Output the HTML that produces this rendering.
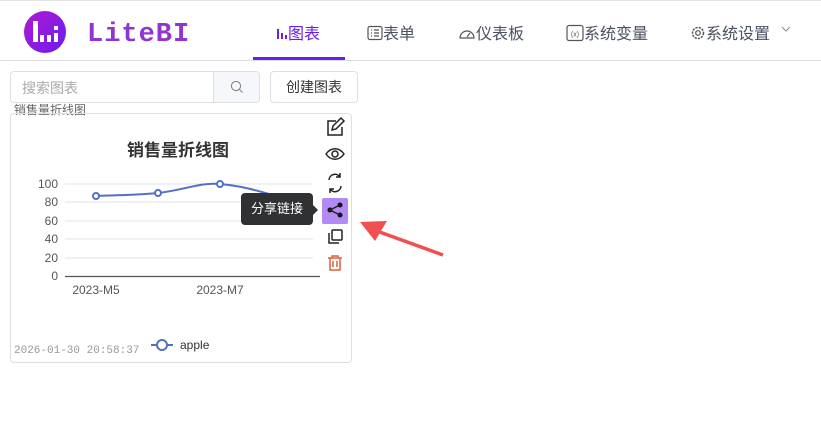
<!DOCTYPE html>
<html><head><meta charset="utf-8"><style>
*{margin:0;padding:0;box-sizing:border-box}
body{width:821px;height:447px;background:#fff;font-family:"Liberation Sans","Noto Sans CJK SC",sans-serif;position:relative;overflow:hidden}
.hdr{position:absolute;left:0;top:0;width:821px;height:61px;border-top:1px solid #e4e4e4;border-bottom:1px solid #dcdfe6;background:#fff}
.a{position:absolute}
.nav{position:absolute;top:20px;font-size:16px;color:#4a5060;white-space:nowrap}
</style></head><body>
<div class="hdr"></div>
<div class="a" style="left:24px;top:11px;width:42px;height:42px;border-radius:50%;background:linear-gradient(135deg,#b01ad0,#6a1cf0)"></div>
<svg class="a" style="left:24px;top:11px" width="42" height="42"><g fill="#fff"><rect x="9" y="10" width="5" height="21"/><rect x="16" y="24" width="4" height="7"/><rect x="23" y="24" width="4" height="7"/><rect x="30" y="22" width="4" height="9"/><rect x="30" y="15" width="4" height="4"/></g></svg>
<div class="a" style="left:87px;top:20px;font:bold 27px 'Liberation Mono',monospace;color:#9036d0;letter-spacing:1px">LiteBI</div>
<div class="nav" style="left:276px;color:#6b1cf0">
<svg width="12" height="12" style="vertical-align:-1px"><g fill="#6b1cf0"><rect x="1" y="1" width="2" height="10"/><rect x="5" y="5" width="2" height="6"/><rect x="9" y="7" width="2" height="4"/></g></svg>图表</div>
<div class="a" style="left:253px;top:57px;width:92px;height:3px;background:#6b1cf0"></div>
<div class="nav" style="left:367px"><svg width="16" height="16" style="vertical-align:-2px"><rect x="1" y="1.5" width="14" height="13" rx="2" fill="none" stroke="#555" stroke-width="1.2"/><path d="M4 5h1M7 5h5M4 8h1M7 8h5M4 11h1M7 11h5" stroke="#555" stroke-width="1.2"/></svg>表单</div>
<div class="nav" style="left:458px"><svg width="18" height="16" style="vertical-align:-2px"><path d="M2 13a7 7 0 1 1 14 0z" fill="none" stroke="#555" stroke-width="1.2"/><path d="M9 12l3-4" stroke="#555" stroke-width="1.2"/></svg>仪表板</div>
<div class="nav" style="left:566px"><svg width="18" height="18" style="vertical-align:-3px"><rect x="1" y="1.5" width="16" height="15" rx="2" fill="none" stroke="#555" stroke-width="1.2"/><text x="9" y="12.5" font-size="7" text-anchor="middle" fill="#555" font-family="Liberation Sans">(x)</text></svg>系统变量</div>
<div class="nav" style="left:690px"><svg width="16" height="16" style="vertical-align:-2px"><circle cx="8" cy="8" r="5.5" fill="none" stroke="#555" stroke-width="1.5" stroke-dasharray="2.2 1.1"/><circle cx="8" cy="8" r="2.3" fill="none" stroke="#555" stroke-width="1.2"/></svg>系统设置</div>
<svg class="a" style="left:781px;top:26px" width="10" height="7"><path d="M1 1l4 4 4-4" fill="none" stroke="#888" stroke-width="1"/></svg>

<div class="a" style="left:10px;top:71px;width:250px;height:32px;border:1px solid #dcdfe6;border-radius:4px"></div>
<div class="a" style="left:213px;top:72px;width:46px;height:30px;background:#f5f7fa;border-left:1px solid #dcdfe6;border-radius:0 4px 4px 0"></div>
<svg class="a" style="left:230px;top:80px" width="14" height="14"><circle cx="6" cy="6" r="4.6" fill="none" stroke="#888" stroke-width="1.1"/><path d="M9.5 9.5l3 3" stroke="#888" stroke-width="1.1"/></svg>
<div class="a" style="left:22px;top:78px;font-size:14px;color:#aaa">搜索图表</div>
<div class="a" style="left:270px;top:71px;width:88px;height:32px;border:1px solid #dcdfe6;border-radius:4px;font-size:14px;color:#333;text-align:center;line-height:30px">创建图表</div>
<div class="a" style="left:14px;top:101px;font-size:12px;color:#666">销售量折线图</div>

<div class="a" style="left:10px;top:113px;width:342px;height:250px;border:1px solid #dcdfe6;border-radius:4px"></div>
<div class="a" style="left:127px;top:136px;font-size:17px;font-weight:bold;color:#333">销售量折线图</div>
<svg class="a" style="left:0;top:0" width="330" height="360" font-family="Liberation Sans" font-size="12" fill="#555">
<g stroke="#e0e3ea"><path d="M65 184H313M65 202H313M65 221H313M65 239H313M65 258H313"/></g>
<path d="M65 276.5H320" stroke="#555" stroke-width="1.3"/>
<g text-anchor="end"><text x="58" y="188">100</text><text x="58" y="206">80</text><text x="58" y="225">60</text><text x="58" y="243">40</text><text x="58" y="262">20</text><text x="58" y="280">0</text></g>
<text x="96" y="294" text-anchor="middle">2023-M5</text><text x="220" y="294" text-anchor="middle">2023-M7</text>
<path d="M96 196C120 195 140 195 158 193C185 190 200 182 220 184C245 186 265 193 290 200" fill="none" stroke="#5470c6" stroke-width="2"/>
<g fill="#fff" stroke="#5470c6" stroke-width="2"><circle cx="96" cy="196" r="3"/><circle cx="158" cy="193" r="3"/><circle cx="220" cy="184" r="3"/></g>
<path d="M151 345H173" stroke="#5470c6" stroke-width="2"/><circle cx="162" cy="345" r="5" fill="#fff" stroke="#5470c6" stroke-width="2"/>
<text x="180" y="349" fill="#333">apple</text>
<text x="14" y="353" font-family="Liberation Mono" font-size="11" fill="#999">2026-01-30 20:58:37</text>
</svg>
<div class="a" style="left:322px;top:198px;width:26px;height:26px;background:#b18af5;border-radius:2px"></div>
<svg class="a" style="left:320px;top:114px" width="30" height="165" fill="none" stroke="#222" stroke-width="1.5">
<path d="M16 7H8v14h14v-8M12 16l1-4 8-8 3 3-8 8z"/>
<path d="M6 40c5-7 13-7 18 0c-5 7-13 7-18 0z"/><circle cx="15" cy="40" r="3"/>
<path d="M9 66a6 6 0 0 1 11-3M21 72a6 6 0 0 1-11 3M20 59v4h-4M10 79v-4h4"/>
<g fill="#111" stroke="#111"><circle cx="20" cy="91" r="1.8"/><circle cx="10" cy="96" r="1.8"/><circle cx="20" cy="101" r="1.8"/></g><path d="M20 91l-10 5 10 5"/>
<rect x="12" y="116" width="10" height="10" rx="1"/><path d="M9 119v10h10"/>
<g stroke="#e0603a"><path d="M8 144h14M12 144v-2h6v2M10 144v12h10v-12M13 147v6M17 147v6"/></g>
</svg>
<div class="a" style="left:241px;top:193px;width:72px;height:32px;background:#303133;border-radius:4px;color:#fff;font-size:13px;line-height:32px;text-align:center">分享链接</div>
<div class="a" style="left:313px;top:205px;border:5px solid transparent;border-left-color:#303133"></div>
<svg class="a" style="left:355px;top:215px" width="95" height="45"><path d="M22 16L88 40" stroke="#f05050" stroke-width="3.5"/><path d="M5 7L32 6 20 26z" fill="#f05050"/></svg>
</body></html>
